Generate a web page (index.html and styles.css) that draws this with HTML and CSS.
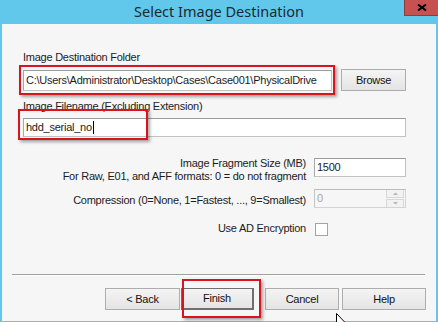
FILE: index.html
```html
<!DOCTYPE html>
<html lang="en">
<head>
    <meta charset="UTF-8">
    <title>Select Image Destination</title>
    <link rel="stylesheet" href="styles.css">
</head>
<body>

<div class="window">
    <div class="titlebar">
        <span></span>
        <h1 class="title">Select Image Destination</h1>
        <div class="close">
            <svg width="10" height="7" viewBox="0 0 10 7">
                <path d="M1 0.5 L9 6.5 M9 0.5 L1 6.5" stroke="#000" stroke-width="2"/>
            </svg>
        </div>
    </div>

    <div class="dialog">
        <div class="content">
            <div class="field-label">Image Destination Folder</div>
            <div class="folder-row">
                <div class="text-box folder">C:\Users\Administrator\Desktop\Cases\Case001\PhysicalDrive</div>
                <div class="btn browse">Browse</div>
            </div>

            <div class="field-label second">Image Filename (Excluding Extension)</div>
            <div class="text-box filename">hdd_serial_no<span class="caret"></span></div>

            <!-- options: label on the left, control on the right -->
            <div class="options">
                <div class="opt-label">Image Fragment Size (MB)<br>For Raw, E01, and AFF formats: 0 = do not fragment</div>
                <div class="text-box fragment">1500</div>

                <div class="opt-label compress">Compression (0=None, 1=Fastest, ..., 9=Smallest)</div>
                <div class="text-box spin disabled">
                    <span>0</span>
                    <div class="spin-arrows">
                        <div class="arrow"><svg width="5" height="3"><path d="M0 3 L2.5 0.5 L5 3 Z" fill="#b5b5b5"/></svg></div>
                        <div class="arrow"><svg width="5" height="3"><path d="M0 0 L2.5 2.5 L5 0 Z" fill="#b5b5b5"/></svg></div>
                    </div>
                </div>

                <div class="opt-label encrypt">Use AD Encryption</div>
                <div class="checkbox"></div>
            </div>
        </div>

        <div class="separator"></div>

        <div class="buttons">
            <div class="btn back">&lt; Back</div>
            <div class="btn finish">Finish</div>
            <div class="btn cancel">Cancel</div>
            <div class="btn help">Help</div>
        </div>

        <!-- red highlight marks drawn over the dialog -->
        <div class="mark mark-folder"></div>
        <div class="mark mark-filename"></div>
        <div class="mark mark-finish"></div>

        <svg class="cursor" width="13" height="20" viewBox="0 0 13 20">
            <path d="M0.5 0.5 L0.5 16 L4 12.5 L6.5 18.5 L8.5 17.5 L6 11.5 L11 11.5 Z" fill="#fff" stroke="#000" stroke-width="1"/>
        </svg>
    </div>
</div>

</body>
</html>
```

FILE: styles.css
```css
body {
    margin: 0;
    width: 438px;
    height: 322px;
    overflow: hidden;
    font-family: 'Liberation Sans', Arial, sans-serif;
}

.window {
    width: 438px;
    height: 322px;
    background-color: #62c8eb;
    display: flex;
    flex-direction: column;
    overflow: hidden;
}

.titlebar {
    height: 24px;
    display: grid;
    grid-template-columns: 1fr auto 1fr;
}

.title {
    margin: 0;
    font-family: 'Noto Sans', 'Open Sans', sans-serif;
    font-weight: normal;
    font-size: 14.5px;
    line-height: 22px;
    color: #1a2a30;
}

.close {
    justify-self: end;
    width: 33px;
    height: 15px;
    background-color: #c75050;
    border: 1px solid #8e3b3b;
    border-top: none;
    border-right: none;
    display: flex;
    align-items: center;
    justify-content: center;
}

.dialog {
    position: relative;
    flex: 1;
    margin: 0 2px 1px 2px;
    background-color: #f6f6f6;
    font-size: 11px;
    line-height: 13px;
    letter-spacing: -0.25px;
    color: #1c1c1c;
}

.content {
    padding: 27px 30px 0 21px;
}

.field-label.second {
    margin-top: 9px;
}

.text-box {
    box-sizing: border-box;
    background-color: #fff;
    border: 1px solid #c2c2c2;
    border-top-color: #9c9c9c;
    border-left-color: #a8a8a8;
    padding: 0 2px;
    white-space: nowrap;
    overflow: hidden;
    display: flex;
    align-items: center;
}

.folder-row {
    margin-top: 5px;
    height: 22px;
    display: flex;
    align-items: flex-end;
}

.folder {
    width: 309px;
    height: 21px;
}

.filename {
    margin-top: 5px;
    height: 19px;
}

.caret {
    display: inline-block;
    width: 1px;
    height: 13px;
    background-color: #000;
    margin-left: 1px;
}

.options {
    margin-top: 20px;
    display: grid;
    grid-template-columns: 1fr 92px;
    column-gap: 8px;
    align-items: start;
}

.opt-label {
    text-align: right;
}

.fragment {
    margin-top: 1px;
    height: 19px;
}

.compress {
    margin-top: 11px;
}

.spin {
    margin-top: 6px;
    height: 19px;
    padding-right: 1px;
    justify-content: space-between;
}

.disabled {
    background-color: #f6f6f6;
    color: #a8a8a8;
    border-color: #d4d4d4;
    border-top-color: #bcbcbc;
    border-left-color: #c4c4c4;
}

.spin-arrows {
    display: flex;
    flex-direction: column;
    gap: 1px;
}

.arrow {
    width: 16px;
    height: 7px;
    border: 1px solid #d8d8d8;
    background-color: #f2f2f2;
    display: flex;
    align-items: center;
    justify-content: center;
}

.encrypt {
    margin-top: 14px;
}

.checkbox {
    margin: 15px 0 0 1px;
    width: 13px;
    height: 13px;
    box-sizing: border-box;
    border: 1px solid #a4a4a4;
    background-color: #fff;
}

.separator {
    margin: 38px 11px 0 10px;
    height: 1px;
    background-color: #a0a0a0;
    border-bottom: 1px solid #fff;
}

.buttons {
    margin-top: 12px;
    padding-right: 10px;
    display: flex;
    justify-content: flex-end;
}

.btn {
    box-sizing: border-box;
    height: 22px;
    border: 1px solid #adadad;
    background: linear-gradient(#f4f4f4, #e4e4e4);
    display: flex;
    align-items: center;
    justify-content: center;
    color: #111;
}

.browse {
    margin-left: auto;
    width: 65px;
}

.back {
    width: 75px;
}

.finish {
    width: 73px;
    margin-left: 1px;
    border: 1px solid #6f6f6f;
    border-right-width: 2px;
    border-bottom-width: 2px;
}

.cancel {
    width: 74px;
    margin-left: 11px;
}

.help {
    width: 84px;
    margin-left: 3px;
}

.mark {
    position: absolute;
    box-sizing: border-box;
    border: 2px solid #d8141e;
    box-shadow: 2px 2px 3px rgba(0, 0, 0, 0.35);
}

.mark-folder {
    left: 17px;
    top: 41px;
    width: 316px;
    height: 30px;
}

.mark-filename {
    left: 16px;
    top: 85px;
    width: 130px;
    height: 31px;
}

.mark-finish {
    left: 180px;
    top: 255px;
    width: 79px;
    height: 39px;
}

.cursor {
    position: absolute;
    left: 334px;
    top: 289px;
}
```
